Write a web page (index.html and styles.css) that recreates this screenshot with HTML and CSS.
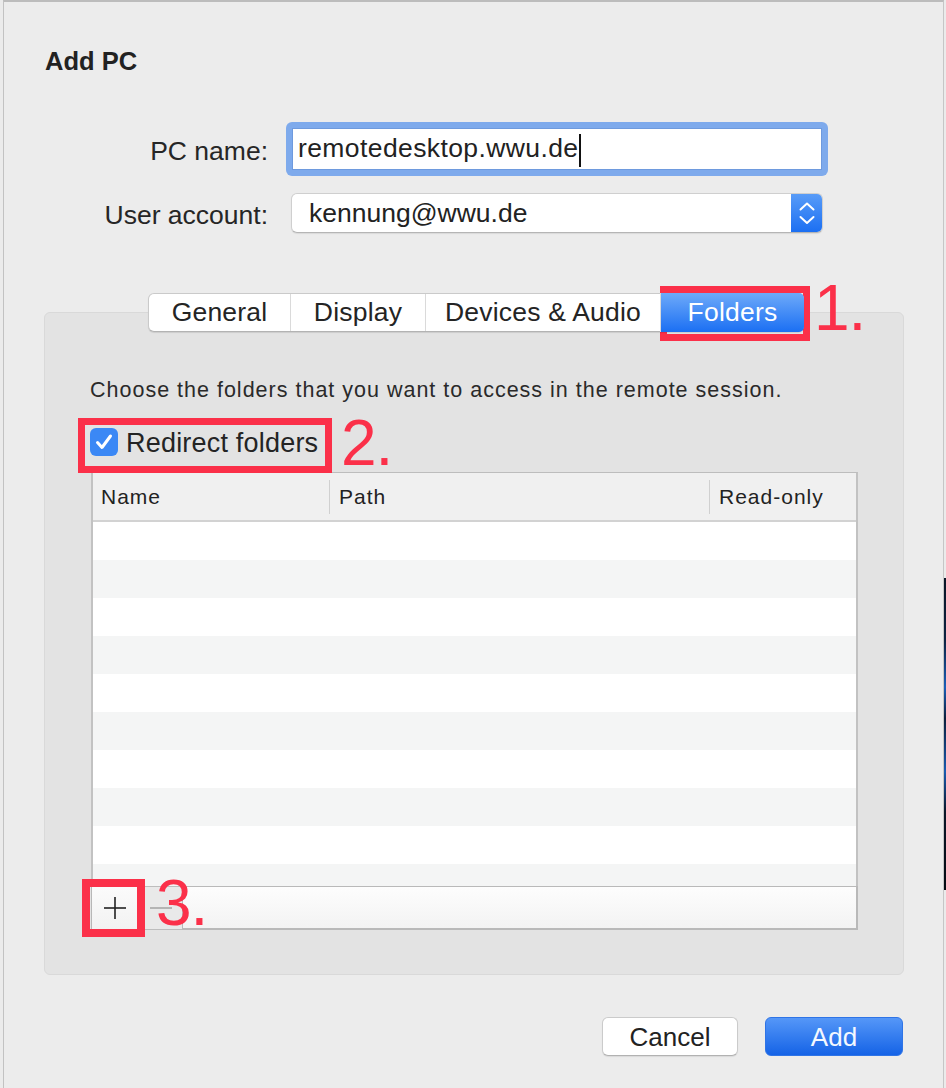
FILE: index.html
```html
<!DOCTYPE html>
<html>
<head>
<meta charset="utf-8">
<link rel="stylesheet" href="styles.css">
</head>
<body>
<div class="window">
  <h1 class="title">Add PC</h1>

  <div class="form">
    <label class="label">PC name:</label>
    <div class="focus-ring">
      <div class="field">remotedesktop.wwu.de<span class="caret"></span></div>
    </div>
    <label class="label">User account:</label>
    <div class="popup">
      <span class="popup-text">kennung@wwu.de</span>
      <span class="stepper">
        <svg width="32" height="40" viewBox="0 0 32 40"><polyline points="9.5,16.5 16,10.5 22.5,16.5" fill="none" stroke="#fff" stroke-width="2" stroke-linecap="round" stroke-linejoin="round"/><polyline points="9.5,24 16,30 22.5,24" fill="none" stroke="#fff" stroke-width="2" stroke-linecap="round" stroke-linejoin="round"/></svg>
      </span>
    </div>
  </div>

  <div class="tabview">
    <div class="tabs">
      <div class="seg seg-general">General</div>
      <div class="seg seg-display">Display</div>
      <div class="seg seg-devices">Devices &amp; Audio</div>
      <div class="seg seg-folders">Folders</div>
    </div>
    <div class="panel">
      <p class="hint">Choose the folders that you want to access in the remote session.</p>
      <div class="check-row">
        <span class="checkbox">
          <svg width="28" height="28" viewBox="0 0 28 28"><polyline points="7.5,14.5 12,19.5 20.5,8" fill="none" stroke="#fff" stroke-width="3" stroke-linecap="round" stroke-linejoin="round"/></svg>
        </span>
        <span class="check-label">Redirect folders</span>
      </div>
      <div class="table">
        <div class="thead">
          <div class="th th-name">Name</div>
          <span class="sep"></span>
          <div class="th th-path">Path</div>
          <span class="sep"></span>
          <div class="th th-ro">Read-only</div>
        </div>
        <div class="rows">
          <div class="trow"></div><div class="trow"></div><div class="trow"></div><div class="trow"></div><div class="trow"></div>
          <div class="trow"></div><div class="trow"></div><div class="trow"></div><div class="trow"></div><div class="trow"></div>
        </div>
      </div>
      <div class="tfoot">
        <div class="btn-plus">
          <svg width="24" height="24" viewBox="0 0 24 24"><line x1="1" y1="12" x2="23" y2="12" stroke="#222" stroke-width="1.6"/><line x1="12" y1="1" x2="12" y2="23" stroke="#222" stroke-width="1.6"/></svg>
        </div>
        <div class="btn-minus"><span class="dash"></span></div>
        <div class="bar"></div>
      </div>
    </div>
  </div>

  <div class="buttons">
    <button class="btn btn-cancel">Cancel</button>
    <button class="btn btn-add">Add</button>
  </div>

  <div class="mark mark-1"></div>
  <div class="num num-1">1.</div>
  <div class="mark mark-2"></div>
  <div class="num num-2">2.</div>
  <div class="mark mark-3"></div>
  <div class="num num-3">3.</div>
</div>
<div class="desktop"><div class="desktop-strip"></div></div>
</body>
</html>
```

FILE: styles.css
```css
html, body {
  margin: 0;
  padding: 0;
}
body {
  background: #ebebeb;
  font-family: "Liberation Sans", Arial, sans-serif;
  color: #242424;
  display: flex;
  padding-left: 3px;
  width: 946px;
  height: 1088px;
  box-sizing: border-box;
  overflow: hidden;
}
.window {
  position: relative;
  width: 941px;
  height: 1088px;
  box-sizing: border-box;
  background: #ececec;
  border-left: 1px solid #c2c2c2;
  border-right: 1px solid #c6c6c6;
  border-top: 2px solid #bcbcbc;
  padding-top: 44px;
  flex: none;
}
.desktop {
  flex: 1;
  display: flex;
  flex-direction: column;
}
.desktop-strip {
  margin-top: 578px;
  height: 312px;
  background: linear-gradient(#0a1526 0%, #0d2342 20%, #1b5fb8 35%, #0c1f3c 45%, #1a5bb0 62%, #0a1628 75%, #050a12 100%);
}
.title {
  margin: 0 0 0 41px;
  font-size: 25.5px;
  line-height: 30px;
  font-weight: bold;
  color: #222;
}

/* form */
.form {
  margin-top: 46px;
  display: grid;
  grid-template-columns: 264px 542px;
  column-gap: 18px;
  row-gap: 17px;
  align-items: center;
}
.label {
  text-align: right;
  font-size: 26.5px;
  line-height: 30px;
  padding-top: 4px;
  color: #262626;
}
.focus-ring {
  height: 54px;
  box-sizing: border-box;
  padding: 6px;
  background: #7eaaec;
  border-radius: 6px;
}
.field {
  height: 42px;
  box-sizing: border-box;
  background: #fff;
  border: 1px solid #6e9ade;
  font-size: 26.5px;
  letter-spacing: 0.4px;
  line-height: 30px;
  padding: 4px 0 0 5px;
  color: #222;
  display: flex;
  align-items: flex-start;
  white-space: nowrap;
}
.caret {
  display: inline-block;
  width: 2px;
  height: 33px;
  margin-top: 1px;
  background: #111;
}
.popup {
  margin-left: 5px;
  width: 532px;
  height: 40px;
  box-sizing: border-box;
  background: #fff;
  border-radius: 6px;
  border: 1px solid #cfcfcf;
  border-bottom-color: #b5b5b5;
  box-shadow: 0 1px 1px rgba(0,0,0,0.08);
  display: flex;
  align-items: center;
  justify-content: space-between;
  overflow: hidden;
}
.popup-text {
  font-size: 26.5px;
  line-height: 30px;
  padding-left: 17px;
  color: #222;
}
.stepper {
  width: 32px;
  height: 40px;
  margin: -1px -1px -1px 0;
  background: linear-gradient(#5a9df8, #1a6ef2);
  border-radius: 0 6px 6px 0;
  display: flex;
}

/* tabs */
.tabview {
  margin: 60px 0 0 40px;
  width: 860px;
}
.tabs {
  position: relative;
  z-index: 1;
  margin-left: 104px;
  display: flex;
  width: fit-content;
  height: 39px;
  box-sizing: border-box;
  background: #fff;
  border: 1px solid #cacaca;
  border-bottom-color: #b3b3b3;
  border-radius: 6px;
  box-shadow: 0 1px 1px rgba(0,0,0,0.1);
}
.seg {
  box-sizing: border-box;
  height: 37px;
  font-size: 26.5px;
  letter-spacing: 0.2px;
  line-height: 37px;
  text-align: center;
  color: #242424;
}
.seg + .seg {
  border-left: 1px solid #dadada;
}
.seg-general { width: 141px; }
.seg-display { width: 135px; }
.seg-devices { width: 235px; }
.seg-folders {
  width: 144px;
  color: #fff;
  background: linear-gradient(#6eaaf9, #1b6ff3);
  border-radius: 0 5px 5px 0;
  border-left: none;
  margin: -1px -1px -1px 0;
  height: 39px;
  line-height: 39px;
}
.panel {
  margin-top: -20px;
  background: #e3e3e3;
  border: 1px solid #d9d9d9;
  border-radius: 6px;
  padding: 64px 45px 44px 45px;
}
.hint {
  margin: 0;
  font-size: 21.5px;
  letter-spacing: 1px;
  line-height: 26px;
  color: #2a2a2a;
  white-space: nowrap;
}
.check-row {
  margin-top: 25px;
  display: flex;
  align-items: center;
  gap: 8px;
  height: 28px;
}
.checkbox {
  width: 28px;
  height: 28px;
  border-radius: 6px;
  background: #3b88f5;
  display: flex;
  flex: none;
}
.check-label {
  font-size: 27px;
  letter-spacing: 0.2px;
  line-height: 28px;
  padding-top: 1px;
  color: #242424;
}

/* table */
.table {
  margin: 16px 0 0 1px;
  border: 1px solid #bdbdbd;
  border-left: 2px solid #c2c2c2;
  border-right: 2px solid #c2c2c2;
  border-bottom: none;
  background: #fff;
}
.thead {
  height: 47px;
  background: #f0f0f0;
  border-bottom: 2px solid #d2d2d2;
  display: flex;
  align-items: center;
}
.th {
  font-size: 21px;
  letter-spacing: 1px;
  line-height: 47px;
  color: #222;
  box-sizing: border-box;
}
.th-name { width: 236px; padding-left: 8px; }
.th-path { width: 379px; padding-left: 9px; }
.th-ro { flex: 1; padding-left: 9px; }
.sep {
  width: 1px;
  height: 34px;
  background: #d0d0d0;
  flex: none;
}
.rows {
  height: 364px;
  overflow: hidden;
}
.trow {
  height: 38px;
  background: #fff;
}
.trow:nth-child(even) {
  background: #f4f5f5;
}
.tfoot {
  margin-left: 1px;
  display: flex;
  height: 44px;
}
.btn-plus {
  width: 46px;
  box-sizing: border-box;
  background: linear-gradient(#fbfbfb, #f2f2f2);
  border: 1px solid #b7b7b7;
  border-right: none;
  display: flex;
  align-items: center;
  justify-content: center;
}
.btn-minus {
  width: 45px;
  box-sizing: border-box;
  background: #e9e9e9;
  border-top: 1px solid #bdbdbd;
  border-bottom: 1px solid #bdbdbd;
  border-left: 1px solid #c8c8c8;
  display: flex;
  align-items: center;
  padding-left: 12px;
}
.dash {
  width: 22px;
  height: 2px;
  background: #b4b4b4;
}
.bar {
  flex: 1;
  box-sizing: border-box;
  background: linear-gradient(#fdfdfd, #f3f3f3);
  border: 2px solid #b9b9b9;
  border-top-width: 1px;
  border-left-width: 1px;
}

/* buttons */
.buttons {
  margin-top: 42px;
  display: flex;
  justify-content: flex-end;
  gap: 27px;
  padding-right: 40px;
}
.btn {
  height: 39px;
  border-radius: 6px;
  font-family: "Liberation Sans", Arial, sans-serif;
  font-size: 26px;
  line-height: 30px;
  padding: 0;
}
.btn-cancel {
  width: 136px;
  background: #fff;
  color: #222;
  border: 1px solid #cbcbcb;
  border-bottom-color: #b2b2b2;
  box-shadow: 0 1px 1px rgba(0,0,0,0.08);
}
.btn-add {
  width: 138px;
  color: #f4f8ff;
  background: linear-gradient(#5597f8, #1563e6);
  border: 1px solid #2f74e6;
}

/* annotations (overlay) */
.mark {
  position: absolute;
  box-sizing: border-box;
  border: 7px solid #fb3049;
}
.mark-1 { left: 656px; top: 284px; width: 150px; height: 55px; }
.mark-2 { left: 74px; top: 416px; width: 254px; height: 55px; }
.mark-3 { left: 78px; top: 877px; width: 63px; height: 58px; border-width: 8px; }
.num {
  position: absolute;
  font-size: 64px;
  line-height: 64px;
  color: #fb3049;
  letter-spacing: -1px;
}
.num-1 { left: 810px; top: 274px; }
.num-2 { left: 337px; top: 409px; }
.num-3 { left: 152px; top: 869px; }
```
